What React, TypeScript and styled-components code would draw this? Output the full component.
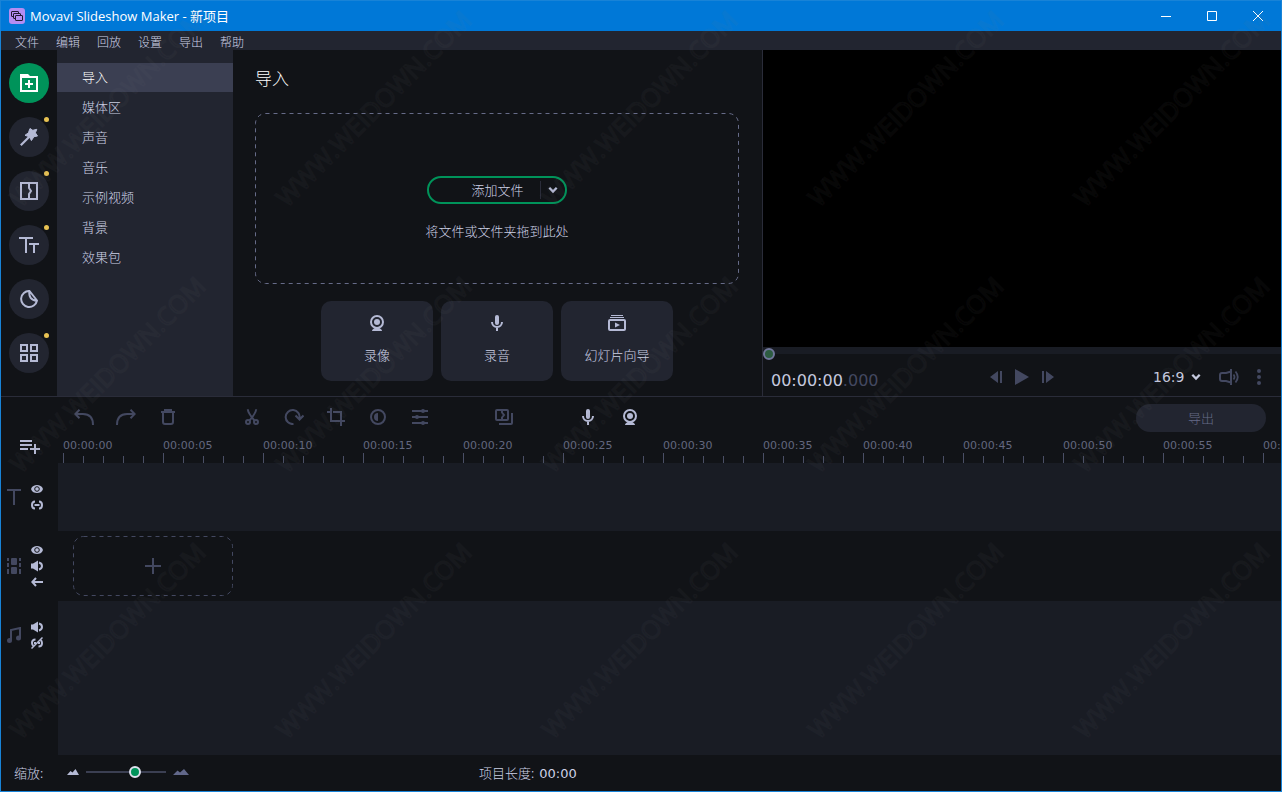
import React from "react";
import styled, { createGlobalStyle, css } from "styled-components";

const c = {
  bg: "#111317",
  panel: "#222530",
  active: "#3b3f52",
  track: "#191c24",
  line: "#2a2c39",
  light: "#b5bad5",
  text: "#cdd1e6",
  dim: "#434860",
  dash: "#666b88",
  green: "#00935a",
  yellow: "#e8c252",
};

const cjk = `"Noto Sans CJK SC", sans-serif`;

const Global = createGlobalStyle`
  *, *::before, *::after { box-sizing: border-box; }
  body { margin: 0; background: ${c.bg}; color: ${c.text}; font: 300 13px/20px "DejaVu Sans", ${cjk}; }
  button, select, input { font: inherit; color: inherit; margin: 0; }
  button { border: 0; padding: 0; background: none; cursor: pointer; }
  svg { display: block; flex: none; }
`;

const Window = styled.div`
  position: relative;
  display: flex;
  flex-direction: column;
  min-height: 100vh;
  border: 1px solid #1883d7;
  overflow: hidden;
`;

const TitleBar = styled.header`
  display: flex;
  align-items: center;
  gap: 5px;
  height: 30px;
  padding-left: 8px;
  background: #0078d7;
  color: #fff;
`;

const Title = styled.h1`
  flex: 1;
  margin: 0;
  font: 400 13px/20px "Open Sans", ${cjk};
`;

const WindowControls = styled.div`
  display: flex;
`;

const WindowButton = styled.button`
  display: grid;
  place-items: center;
  width: 46px;
  height: 28px;
`;

const MenuBar = styled.nav`
  display: flex;
  gap: 17px;
  height: 19px;
  padding: 0 14px;
  background: ${c.panel};
`;

const MenuItem = styled.button`
  font: 300 12px/20px ${cjk};
  height: 22px;
`;

const Workspace = styled.main`
  display: grid;
  grid-template-columns: auto auto minmax(0, 529fr) minmax(0, 519fr);
  min-height: 346px;
`;

const Rail = styled.nav`
  display: flex;
  flex-direction: column;
  gap: 14px;
  padding: 13px 8px;
`;

const RailButton = styled.button<{ $active?: boolean }>`
  position: relative;
  display: grid;
  place-items: center;
  width: 40px;
  height: 40px;
  border-radius: 50%;
  background: ${(p) => (p.$active ? c.green : c.panel)};
  color: ${(p) => (p.$active ? "#fff" : c.light)};
`;

const Badge = styled.span`
  position: absolute;
  top: 0;
  right: 0;
  width: 5px;
  height: 5px;
  border-radius: 50%;
  background: ${c.yellow};
`;

const Categories = styled.nav`
  display: flex;
  flex-direction: column;
  gap: 1px;
  width: 176px;
  padding-top: 13px;
  background: ${c.panel};
`;

const Category = styled.button<{ $active?: boolean }>`
  height: 29px;
  padding: 0 0 2px 25px;
  text-align: left;
  font-family: ${cjk};
  background: ${(p) => (p.$active ? c.active : "transparent")};
  color: ${(p) => (p.$active ? "#fff" : c.text)};
`;

const ImportPanel = styled.section`
  display: flex;
  flex-direction: column;
  padding: 14px 23px 14px 22px;
`;

const Heading = styled.h2`
  margin: 0;
  font: 300 17px/28px ${cjk};
  color: #fff;
`;

const Dashed = styled.svg`
  position: absolute;
  inset: 0;
  width: 100%;
  height: 100%;
  pointer-events: none;
  rect {
    width: calc(100% - 1px);
    height: calc(100% - 1px);
  }
`;

const DropZone = styled.div`
  position: relative;
  display: flex;
  flex-direction: column;
  align-items: center;
  justify-content: center;
  gap: 17px;
  height: 171px;
  margin-top: 21px;
  padding-top: 20px;
`;

const Hint = styled.p`
  margin: 0;
  font-family: ${cjk};
`;

const SplitButton = styled.div`
  display: flex;
  align-items: center;
  width: 140px;
  height: 28px;
  border: 2px solid ${c.green};
  border-radius: 14px;
`;

const SplitMain = styled.button`
  flex: 1;
  height: 20px;
  padding-left: 26px;
  font-family: ${cjk};
`;

const SplitMore = styled.button`
  display: grid;
  place-items: center;
  width: 25px;
  height: 18px;
  border-left: 1px solid ${c.line};
  color: ${c.light};
`;

const Cards = styled.div`
  display: flex;
  justify-content: center;
  gap: 8px;
  margin-top: 17px;
`;

const Card = styled.button`
  display: flex;
  flex-direction: column;
  align-items: center;
  gap: 14px;
  width: 112px;
  height: 80px;
  padding-top: 14px;
  border-radius: 10px;
  background: ${c.panel};
  font-family: ${cjk};
  svg {
    color: ${c.light};
  }
`;

const Preview = styled.section`
  display: flex;
  flex-direction: column;
  border-left: 1px solid ${c.line};
`;

const Screen = styled.div`
  flex: 1;
  background: #000;
`;

const thumb = css`
  appearance: none;
  width: 12px;
  height: 12px;
  border-radius: 50%;
  box-sizing: border-box;
`;

const Seek = styled.input`
  display: block;
  appearance: none;
  width: 100%;
  height: 14px;
  background: linear-gradient(${c.track} 7px, transparent 7px);
  &::-webkit-slider-thumb {
    ${thumb}
    border: 2px solid #70769a;
    background: #2d5c41;
  }
`;

const Transport = styled.div`
  display: grid;
  grid-template-columns: 1fr auto 1fr;
  align-items: center;
  height: 35px;
  padding: 0 8px 4px;
`;

const TimeCode = styled.output`
  padding-top: 8px;
  font-size: 16px;
  font-weight: 400;
  color: #c5c9df;
`;

const Millis = styled.span`
  color: ${c.dim};
`;

const Playback = styled.div`
  display: flex;
  gap: 13px;
  color: ${c.dim};
`;

const IconButton = styled.button`
  display: grid;
  place-items: center;
`;

const ViewOptions = styled.div`
  display: flex;
  align-items: center;
  justify-content: flex-end;
  gap: 18px;
  padding-right: 12px;
  color: ${c.dim};
`;

const RatioBox = styled.label`
  position: relative;
  display: flex;
  align-items: center;
  color: #c5c9df;
  svg {
    position: absolute;
    right: 0;
    pointer-events: none;
  }
`;

const Ratio = styled.select`
  appearance: none;
  width: 48px;
  height: 20px;
  padding: 0;
  border: 0;
  background: transparent;
  font-size: 14px;
  font-weight: 400;
`;

const Timeline = styled.section`
  display: flex;
  flex: 1;
  flex-direction: column;
  border-top: 1px solid ${c.line};
`;

const Toolbar = styled.div`
  display: flex;
  height: 41px;
  padding: 0 15px 0 62px;
`;

const ToolGroup = styled.div<{ $bright?: boolean }>`
  display: flex;
  margin-right: 42px;
  color: ${(p) => (p.$bright ? c.light : c.dim)};
`;

const Tool = styled.button`
  display: grid;
  place-items: center;
  width: 42px;
  height: 40px;
`;

const Export = styled.button`
  width: 130px;
  height: 28px;
  margin: 7px 0 0 auto;
  border-radius: 14px;
  background: ${c.panel};
  color: ${c.dash};
  font-family: ${cjk};
`;

const RulerRow = styled.div`
  display: flex;
  height: 25px;
`;

const Head = styled.div`
  display: flex;
  flex: none;
  align-items: center;
  gap: 10px;
  width: 57px;
  height: 68px;
  padding-left: 6px;
  color: ${c.dim};
`;

const AddTrack = styled.button`
  flex: none;
  width: 62px;
  padding: 0 0 7px 19px;
  color: ${c.light};
`;

const Ruler = styled.div`
  display: flex;
  flex: 1;
  min-width: 0;
  overflow: hidden;
`;

const Mark = styled.div`
  display: flex;
  flex: 0 0 100px;
  flex-direction: column;
  justify-content: space-between;
  font-size: 11px;
  font-weight: 400;
  line-height: 15px;
  color: #62677f;
`;

const Ticks = styled.div`
  display: flex;
  align-items: flex-end;
`;

const Tick = styled.i<{ $major: boolean }>`
  width: 20px;
  height: ${(p) => (p.$major ? 10 : 7)}px;
  border-left: 1px solid #4a4f66;
`;

const Track = styled.div<{ $grow?: boolean; $tall?: boolean }>`
  display: flex;
  flex: ${(p) => (p.$grow ? 1 : "none")};
  min-height: ${(p) => (p.$tall ? 70 : 68)}px;
  align-items: ${(p) => (p.$tall ? "center" : "stretch")};
`;

const Lane = styled.div<{ $filled?: boolean }>`
  flex: 1;
  min-width: 0;
  padding-left: 15px;
  background: ${(p) => (p.$filled ? c.track : "transparent")};
`;

const Toggles = styled.div`
  display: flex;
  flex-direction: column;
  gap: 4px;
  color: ${c.light};
`;

const ClipSlot = styled.button`
  position: relative;
  display: grid;
  place-items: center;
  width: 160px;
  height: 60px;
  color: ${c.dim};
`;

const Footer = styled.footer`
  display: flex;
  align-items: center;
  height: 36px;
  padding: 0 13px 2px;
`;

const Zoom = styled.label`
  display: flex;
  align-items: center;
  gap: 7px;
  color: #62688a;
`;

const FooterText = styled.span`
  padding-top: 2px;
  font-family: ${cjk};
  font-weight: 300;
  color: ${c.text};
`;

const ZoomLabel = styled(FooterText)`
  width: 46px;
`;

const ZoomSlider = styled.input`
  appearance: none;
  width: 80px;
  height: 12px;
  background: linear-gradient(${c.active}, ${c.active}) center / 100% 2px no-repeat;
  &::-webkit-slider-thumb {
    ${thumb}
    border: 2px solid #dfe1ee;
    background: ${c.green};
  }
`;

const Length = styled.div`
  display: flex;
  align-items: baseline;
  gap: 5px;
  margin-left: 290px;
  font-weight: 400;
`;

const Watermarks = styled.div`
  position: absolute;
  top: -26px;
  left: -27px;
  right: -266px;
  bottom: -266px;
  display: grid;
  grid-template-columns: repeat(auto-fill, 266px);
  grid-auto-rows: 266px;
  pointer-events: none;
`;

const Watermark = styled.span`
  display: grid;
  place-content: center;
  font: 400 25px/28px "Open Sans", sans-serif;
  white-space: nowrap;
  color: transparent;
  -webkit-text-stroke: 2px rgba(120, 120, 120, 0.06);
  transform: rotate(-45deg);
`;

type IconProps = { w: number; h: number; fill?: boolean; sw?: number; children: React.ReactNode };

const Icon = ({ w, h, fill, sw = 2, children }: IconProps) => (
  <svg
    width={w}
    height={h}
    viewBox={`0 0 ${w} ${h}`}
    fill={fill ? "currentColor" : "none"}
    stroke={fill ? "none" : "currentColor"}
    strokeWidth={sw}
    aria-hidden="true"
  >
    {children}
  </svg>
);

const AppLogo = () => (
  <svg width="16" height="16" viewBox="0 0 16 16" fill="#b48df2" stroke="#20182f" aria-hidden="true">
    <rect width="16" height="16" rx="3" stroke="none" />
    <rect x="2.5" y="3.5" width="7" height="5" rx=".5" />
    <rect x="4.5" y="5.5" width="7" height="5" rx=".5" />
    <rect x="6.5" y="7.5" width="7" height="5" rx=".5" />
  </svg>
);

const Chevron = () => (
  <Icon w={10} h={8}><path d="M1.3 1.8 5 5.6 8.7 1.8" strokeWidth="2.3" /></Icon>
);

const ImportIcon = () => (
  <Icon w={18} h={18} fill>
    <path fillRule="evenodd" d="M0 0h8l2 2h8v16H0ZM2 4v12h14V4Z" />
    <path d="M8 6h2v3h3v2h-3v3H8v-3H5V9h3Z" />
  </Icon>
);

const WandIcon = () => (
  <Icon w={18} h={18}>
    <path
      fill="currentColor"
      strokeWidth="1"
      strokeLinejoin="round"
      d="M10 .5 12.8 2.3 16.8 1.3 15.4 4.8 17.5 8 13.9 8.7 11.4 12.6 9.6 8.9 5 7.3 8.4 4.8Z"
    />
    <path d="M.8 17.2 9.5 8.5" strokeWidth="2.2" />
  </Icon>
);

const TransitionIcon = () => (
  <Icon w={18} h={18}><path d="M1 1h16v16H1ZM9 2v4l2 3-2 3v4" /></Icon>
);

const TitlesIcon = () => (
  <Icon w={20} h={16}><path d="M0 1h14M7 1v15M10 7h10M15 7v9" /></Icon>
);

const StickerIcon = () => (
  <Icon w={18} h={18}>
    <path d="M9.5 1A8 8 0 1 0 17 10.5L9.5 1C8.5 6.5 11 10.5 17 10.5" strokeLinejoin="round" />
  </Icon>
);

const GridIcon = () => (
  <Icon w={18} h={18}><path d="M1 1h6v6H1ZM11 1h6v6h-6ZM1 11h6v6H1ZM11 11h6v6h-6Z" /></Icon>
);

const WebcamIcon = () => (
  <Icon w={14} h={16}>
    <circle cx="7" cy="7" r="6" />
    <circle cx="7" cy="7" r="3" fill="currentColor" stroke="none" />
    <path d="M2 16c0-1.5 1.5-2.5 3-3h4c1.5.5 3 1.5 3 3Z" fill="currentColor" stroke="none" />
  </Icon>
);

const MicIcon = () => (
  <Icon w={12} h={16}>
    <rect x="4" y="0" width="4" height="10" rx="2" fill="currentColor" stroke="none" />
    <path d="M1 7a5 5 0 0 0 10 0M6 12v4" />
  </Icon>
);

const SlideshowIcon = () => (
  <Icon w={18} h={16}>
    <path d="M3 .5h12M2 2.5h14" strokeWidth="1" />
    <rect x="1" y="5" width="16" height="10" rx="1" />
    <path d="m7 7.5 5 2.5-5 2.5Z" fill="currentColor" stroke="none" />
  </Icon>
);

const FrameBack = () => (
  <Icon w={12} h={12} fill><path d="M0 6 8 0v12ZM10 0h2v12h-2Z" /></Icon>
);
const PlayIcon = () => (
  <Icon w={14} h={16} fill><path d="M0 0 14 8 0 16Z" /></Icon>
);
const FrameForward = () => (
  <Icon w={12} h={12} fill><path d="M0 0h2v12H0ZM4 0l8 6-8 6Z" /></Icon>
);

const VolumeIcon = () => (
  <Icon w={20} h={16}>
    <path d="M12 0v16M12 2.5 7 4H3Q1 4 1 6v4q0 2 2 2h4l5 1.5" />
    <path d="M14.5 5.5q2 2.5 0 5M16.5 2.5q4.5 5.5 0 11" strokeWidth="1.8" />
  </Icon>
);

const MoreIcon = () => (
  <Icon w={4} h={16} fill><circle cx="2" cy="2" r="2" /><circle cx="2" cy="8" r="2" /><circle cx="2" cy="14" r="2" /></Icon>
);

const UndoIcon = () => (
  <Icon w={20} h={16}><path d="M5.5.8 1.3 5l4.2 4.2M1.5 5H9q10 0 10 11" /></Icon>
);
const RedoIcon = () => (
  <Icon w={20} h={16}><path d="M14.5.8 18.7 5l-4.2 4.2M18.5 5H11Q1 5 1 16" /></Icon>
);
const TrashIcon = () => (
  <Icon w={14} h={16}><path d="M0 3h14M4 2.5V1h6v1.5M2 3v10q0 2 2 2h6q2 0 2-2V3" /></Icon>
);
const ScissorsIcon = () => (
  <Icon w={14} h={16}>
    <circle cx="3" cy="13" r="2" /><circle cx="11" cy="13" r="2" />
    <path d="M2.8.2Q3 4 9.5 11.5M11.2.2Q11 4 4.5 11.5" />
  </Icon>
);
const RotateIcon = () => (
  <Icon w={20} h={16}><path d="M9.5 15A7 7 0 1 1 15.5 9.5M11.5 6.5l4 4 4-4" /></Icon>
);
const CropIcon = () => (
  <Icon w={18} h={18}><path d="M4 0v13h14M0 4h3M6 4h8v8M14 14v4" /></Icon>
);
const ContrastIcon = () => (
  <Icon w={16} h={16}>
    <circle cx="8" cy="8" r="7" /><path d="M8 4v8a4 4 0 0 1 0-8Z" fill="currentColor" stroke="none" />
  </Icon>
);
const AdjustIcon = () => (
  <Icon w={16} h={16}>
    <path d="M0 2h16M0 8h16M0 14h16" />
    <g fill="currentColor" stroke="none"><circle cx="11" cy="2" r="2" /><circle cx="5" cy="8" r="2" /><circle cx="11" cy="14" r="2" /></g>
  </Icon>
);
const TransitionWizardIcon = () => (
  <Icon w={18} h={16}>
    <rect x="1" y="1" width="12" height="10" rx="1" />
    <path d="M7 1v2.5L9 6 7 8.5V11M17 4v10q0 1-1 1H4" />
  </Icon>
);
const AddTrackIcon = () => (
  <Icon w={20} h={14}><path d="M0 1h12M0 5h12M0 9h8M15 4v10M10 9h10" /></Icon>
);

const TitleTrackIcon = () => (
  <Icon w={14} h={16}><path d="M0 1h14M7 1v15" /></Icon>
);
const FilmIcon = () => (
  <Icon w={14} h={16} fill>
    <rect x="4" y="0" width="6" height="7" rx="1" /><rect x="4" y="9" width="6" height="7" rx="1" />
    <path d="M0 0h2v3H0ZM0 5h2v4H0ZM0 11h2v5H0ZM12 0h2v3h-2ZM12 5h2v4h-2ZM12 11h2v5h-2Z" />
  </Icon>
);
const MusicIcon = () => (
  <Icon w={14} h={16}>
    <path d="M4 13V3l9-2v10" />
    <circle cx="2.5" cy="13.5" r="2.5" fill="currentColor" stroke="none" />
    <circle cx="11.5" cy="11" r="2.5" fill="currentColor" stroke="none" />
  </Icon>
);
const EyeIcon = () => (
  <Icon w={12} h={12}>
    <path d="M0 6C1 3 3.5 2 6 2s5 1 6 4c-1 3-3.5 4-6 4S1 9 0 6Z" fill="currentColor" stroke="none" />
    <circle cx="6" cy="6" r="2.3" stroke={c.bg} strokeWidth="1" />
  </Icon>
);
const LinkIcon = () => (
  <Icon w={12} h={12}><path d="M4 2.5Q1 2.5 1 6t3 3.5M8 2.5q3 0 3 3.5T8 9.5M3.5 6h5" /></Icon>
);
const UnlinkIcon = () => (
  <Icon w={12} h={12}>
    <path d="M4.5 2.5Q1 2.5 1 6q0 2 1.5 3M9.5 3q1.5 1 1.5 3 0 3.5-3.5 3.5M3 6h2M7 6h2" />
    <path d="M.5 11.5 11.5.5" strokeWidth="1.5" />
  </Icon>
);
const SpeakerIcon = () => (
  <Icon w={12} h={12}>
    <path d="M0 3.5h2L7 .5v11l-5-3H0Z" fill="currentColor" stroke="none" /><path d="M8 2.5q3 .8 3 3.5T8 9.5" />
  </Icon>
);
const ArrowLeftIcon = () => (
  <Icon w={12} h={12}><path d="M5 2 1.3 6 5 10M1.5 6H12" /></Icon>
);
const PlusIcon = () => (
  <Icon w={16} h={16}><path d="M8 0v16M0 8h16" /></Icon>
);

const DashedOutline = ({ color }: { color: string }) => (
  <Dashed aria-hidden="true">
    <rect x="0.5" y="0.5" rx={10} fill="none" stroke={color} strokeDasharray="4 4" />
  </Dashed>
);

const menus = ["文件", "编辑", "回放", "设置", "导出", "帮助"];
const categories = ["导入", "媒体区", "声音", "音乐", "示例视频", "背景", "效果包"];

const rail = [
  { label: "导入", icon: <ImportIcon />, active: true },
  { label: "滤镜", icon: <WandIcon />, badge: true },
  { label: "转场", icon: <TransitionIcon />, badge: true },
  { label: "标题", icon: <TitlesIcon />, badge: true },
  { label: "贴纸", icon: <StickerIcon /> },
  { label: "更多", icon: <GridIcon />, badge: true },
];

const cards = [
  { label: "录像", icon: <WebcamIcon /> },
  { label: "录音", icon: <MicIcon /> },
  { label: "幻灯片向导", icon: <SlideshowIcon /> },
];

const toolGroups = [
  {
    tools: [
      { label: "撤销", icon: <UndoIcon /> },
      { label: "重做", icon: <RedoIcon /> },
      { label: "删除", icon: <TrashIcon /> },
    ],
  },
  {
    tools: [
      { label: "剪切", icon: <ScissorsIcon /> },
      { label: "旋转", icon: <RotateIcon /> },
      { label: "裁剪", icon: <CropIcon /> },
      { label: "颜色", icon: <ContrastIcon /> },
      { label: "属性", icon: <AdjustIcon /> },
    ],
  },
  { tools: [{ label: "转场向导", icon: <TransitionWizardIcon /> }] },
  {
    bright: true,
    tools: [
      { label: "录音", icon: <MicIcon /> },
      { label: "录像", icon: <WebcamIcon /> },
    ],
  },
];

const marks = Array.from({ length: 13 }, (_, i) => {
  const s = i * 5;
  return `00:${String(Math.floor(s / 60)).padStart(2, "0")}:${String(s % 60).padStart(2, "0")}`;
});

export default function App() {
  return (
    <>
      <Global />
      <Window>
        <TitleBar>
          <AppLogo />
          <Title>Movavi Slideshow Maker - 新项目</Title>
          <WindowControls>
            <WindowButton aria-label="最小化"><Icon w={10} h={10} sw={1}><path d="M0 5.5h10" /></Icon></WindowButton>
            <WindowButton aria-label="最大化"><Icon w={10} h={10} sw={1}><path d="M.5.5h9v9h-9Z" /></Icon></WindowButton>
            <WindowButton aria-label="关闭"><Icon w={10} h={10} sw={1}><path d="m0 0 10 10M10 0 0 10" /></Icon></WindowButton>
          </WindowControls>
        </TitleBar>

        <MenuBar>{menus.map((m) => <MenuItem key={m}>{m}</MenuItem>)}</MenuBar>

        <Workspace>
          <Rail>
            {rail.map((r) => (
              <RailButton key={r.label} aria-label={r.label} $active={r.active}>
                {r.icon}
                {r.badge && <Badge />}
              </RailButton>
            ))}
          </Rail>
          <Categories>
            {categories.map((name, i) => <Category key={name} $active={i === 0}>{name}</Category>)}
          </Categories>

          <ImportPanel>
            <Heading>导入</Heading>
            <DropZone>
              <DashedOutline color={c.dash} />
              <SplitButton>
                <SplitMain>添加文件</SplitMain>
                <SplitMore aria-label="更多添加选项"><Chevron /></SplitMore>
              </SplitButton>
              <Hint>将文件或文件夹拖到此处</Hint>
            </DropZone>
            <Cards>
              {cards.map((card) => <Card key={card.label}>{card.icon}{card.label}</Card>)}
            </Cards>
          </ImportPanel>

          <Preview>
            <Screen />
            <Seek type="range" min={0} max={100} defaultValue={0} aria-label="播放位置" />
            <Transport>
              <TimeCode>00:00:00<Millis>.000</Millis></TimeCode>
              <Playback>
                <IconButton aria-label="上一帧"><FrameBack /></IconButton>
                <IconButton aria-label="播放"><PlayIcon /></IconButton>
                <IconButton aria-label="下一帧"><FrameForward /></IconButton>
              </Playback>
              <ViewOptions>
                <RatioBox>
                  <Ratio aria-label="宽高比" defaultValue="16:9"><option>16:9</option></Ratio>
                  <Chevron />
                </RatioBox>
                <IconButton aria-label="音量"><VolumeIcon /></IconButton>
                <IconButton aria-label="更多"><MoreIcon /></IconButton>
              </ViewOptions>
            </Transport>
          </Preview>
        </Workspace>

        <Timeline>
          <Toolbar>
            {toolGroups.map((g, i) => (
              <ToolGroup key={i} $bright={g.bright}>
                {g.tools.map((t) => <Tool key={t.label} aria-label={t.label}>{t.icon}</Tool>)}
              </ToolGroup>
            ))}
            <Export>导出</Export>
          </Toolbar>

          <RulerRow>
            <AddTrack aria-label="添加轨道"><AddTrackIcon /></AddTrack>
            <Ruler>
              {marks.map((m) => (
                <Mark key={m}>
                  {m}
                  <Ticks>{[0, 1, 2, 3, 4].map((n) => <Tick key={n} $major={n === 0} />)}</Ticks>
                </Mark>
              ))}
            </Ruler>
          </RulerRow>

          <Track>
            <Head>
              <TitleTrackIcon />
              <Toggles>
                <IconButton aria-label="显示标题轨道"><EyeIcon /></IconButton>
                <IconButton aria-label="链接标题轨道"><LinkIcon /></IconButton>
              </Toggles>
            </Head>
            <Lane $filled />
          </Track>
          <Track $tall>
            <Head>
              <FilmIcon />
              <Toggles>
                <IconButton aria-label="显示视频轨道"><EyeIcon /></IconButton>
                <IconButton aria-label="视频轨道静音"><SpeakerIcon /></IconButton>
                <IconButton aria-label="向左对齐"><ArrowLeftIcon /></IconButton>
              </Toggles>
            </Head>
            <Lane>
              <ClipSlot aria-label="添加片段">
                <DashedOutline color={c.dim} />
                <PlusIcon />
              </ClipSlot>
            </Lane>
          </Track>
          <Track $grow>
            <Head>
              <MusicIcon />
              <Toggles>
                <IconButton aria-label="音频轨道静音"><SpeakerIcon /></IconButton>
                <IconButton aria-label="取消链接音频轨道"><UnlinkIcon /></IconButton>
              </Toggles>
            </Head>
            <Lane $filled />
          </Track>

          <Footer>
            <Zoom>
              <ZoomLabel>缩放:</ZoomLabel>
              <Icon w={12} h={6} fill><path fill={c.light} d="M0 6 3.5 2 5.5 3.5 8.5 0 12 6Z" /></Icon>
              <ZoomSlider type="range" min={0} max={100} defaultValue={63} />
              <Icon w={16} h={6} fill><path d="M0 6 4.5 1.5 7 3.5 11 0 16 6Z" /></Icon>
            </Zoom>
            <Length><FooterText>项目长度:</FooterText><span>00:00</span></Length>
          </Footer>
        </Timeline>

        <Watermarks aria-hidden="true">
          {Array.from({ length: 15 }, (_, i) => <Watermark key={i}>WWW.WEIDOWN.COM</Watermark>)}
        </Watermarks>
      </Window>
    </>
  );
}
